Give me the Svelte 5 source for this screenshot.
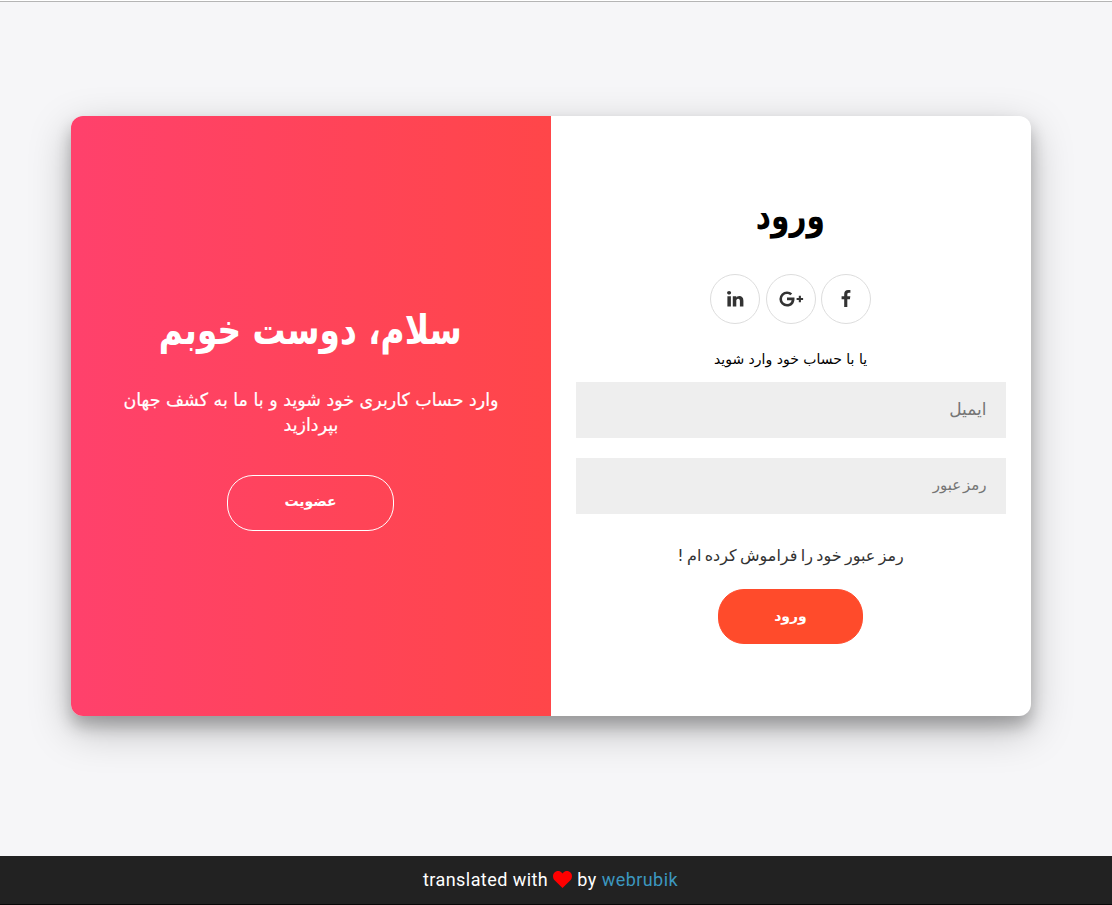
<script>
  const socials = ['facebook', 'google', 'linkedin'];
</script>

<div class="page">
  <main>
    <div class="container" dir="rtl">
      <section class="sign-in">
        <h1 class="title">ورود</h1>
        <div class="social">
          {#each socials as name}
            <a href="#{name}" aria-label={name}>
              {#if name === 'facebook'}
                <svg class="fb" width="10" height="17" viewBox="95 -1536 864 1664"><path d="M959 -1524v264h-157q-86 0 -116 36t-30 108v189h293l-39 296h-254v759h-306v-759h-255v-296h255v-218q0 -186 104 -288.500t277 -102.500q147 0 228 12z" /></svg>
              {:else if name === 'google'}
                <svg class="gp" width="25" height="16" viewBox="0 0 25 16"><path d="M8 6.600h7.400c.1.500.1.900.1 1.400 0 4.500-3 7.600-7.500 7.600A7.600 7.600 0 1 1 8 .4c2.100 0 3.800.7 5.200 2L11.300 4.300C10.700 3.600 9.600 3 8 3a5 5 0 0 0 0 10c3.100 0 4.400-2.200 4.600-3.800H8zM19.800 4.800h2.100v2.200h2.200v2.100h-2.200v2.200h-2.100V9.100h-2.200V7h2.200z" /></svg>
              {:else}
                <svg width="17" height="16" viewBox="0 0 17 16"><path d="M.4 5.200h3.500v10.400H.4zM2.100 0c1.200 0 2 .8 2 1.800s-.8 1.800-2 1.800S.1 2.800.1 1.800.9 0 2.100 0zM5.800 5.200h3.500v1.500C9.800 5.900 10.600 5 12.400 5c2.300 0 4 1.500 4 4.700v5.900h-3.500v-5.500c0-1.400-.5-2.300-1.700-2.300-1.300 0-1.900 1-1.900 2v5.800H5.800z" /></svg>
              {/if}
            </a>
          {/each}
        </div>
        <span class="hint">یا با حساب خود وارد شوید</span>
        <input class="email" type="email" placeholder="ایمیل" />
        <input type="password" placeholder="رمز عبور" />
        <a class="forgot" href="#forgot">رمز عبور خود را فراموش کرده ام !</a>
        <button class="primary">ورود</button>
      </section>
      <section class="overlay">
        <h1>سلام، دوست خوبم</h1>
        <p>وارد حساب کاربری خود شوید و با ما به کشف جهان بپردازید</p>
        <button class="ghost">عضویت</button>
      </section>
    </div>
  </main>
  <footer>
    <span>translated with</span>
    <svg width="19" height="17" viewBox="0 0 19 17"><path d="M9.500 17 1.600 9.200C-.4 7.100-.5 3.600 1.300 1.700 3.500-.6 7-.3 8.800 1.800l.7.800.7-.8C12-.3 15.500-.6 17.700 1.700c1.800 1.900 1.700 5.400-.3 7.500z" /></svg>
    <span>by</span>
    <a href="#webrubik">webrubik</a>
  </footer>
</div>

<style>
  :global(body) { margin: 0; }
  .page {
    box-sizing: border-box;
    height: 905px;
    display: flex;
    flex-direction: column;
    background: #f6f6f8;
    border-top: 1px solid #fff;
    font-family: "DejaVu Sans", sans-serif;
    overflow: hidden;
  }
  main {
    flex: 1;
    display: flex;
    border-top: 1px solid #b5b5b5;
    padding: 114px 81px 0 71px;
  }
  .container {
    width: 960px;
    height: 600px;
    display: flex;
    border-radius: 12px;
    overflow: hidden;
    background: #fff;
    box-shadow: 0 14px 42px rgba(0,0,0,.25), 0 10px 16px rgba(0,0,0,.23);
  }
  section {
    box-sizing: border-box;
    width: 480px;
    display: flex;
    flex-direction: column;
    align-items: center;
  }
  .sign-in { padding: 70px 26px 0 25px; }
  h1 { margin: 0; white-space: nowrap; }
  .title { font-size: 38px; line-height: 60px; margin-bottom: 4px; transform: scaleX(.78); }
  .social { display: flex; gap: 5.5px; margin-top: 24px; }
  .social a {
    box-sizing: border-box;
    width: 50px;
    height: 50px;
    border: 1px solid #ddd;
    border-radius: 50%;
    display: flex;
    align-items: center;
    justify-content: center;
  }
  .social svg { fill: #333; }
  .fb { margin-bottom: 2px; }
  .gp { margin-left: 1px; }
  .hint { font-size: 14px; line-height: 24px; margin: 23px 0 11px; }
  input {
    box-sizing: border-box;
    width: 430px;
    flex-shrink: 0;
    height: 56px;
    border: 0;
    background: #eee;
    padding: 0 19px 2px;
    margin-bottom: 20px;
    font: 15px "DejaVu Sans", sans-serif;
    word-spacing: -3px;
    text-align: right;
  }
  .email { font-size: 17px; }
  input::placeholder { color: #757575; }
  .forgot { font-size: 16px; word-spacing: -1.7px; line-height: 30px; margin: 7px 0 18px; color: #333; text-decoration: none; }
  button {
    box-sizing: border-box;
    border-radius: 26px;
    color: #fff;
    padding: 0 6px 2px;
    font: bold 14px "DejaVu Sans", sans-serif;
  }
  .primary { width: 145px; height: 55px; border: 1px solid #ff4b2b; background: #ff4b2b; }
  .overlay {
    padding: 184px 41px 0 40px;
    color: #fff;
    text-align: center;
    background: linear-gradient(to right, #ff416c, #ff4649);
  }
  .overlay h1 { font-size: 41px; line-height: 60px; transform: scaleX(.8); }
  p { width: 400px; margin: 27px 0 38px; font-size: 18px; line-height: 25px; transform: scaleX(.97); -webkit-text-stroke: .2px #fff; }
  .ghost { width: 167px; height: 56px; border: 1px solid #fff; background: transparent; padding-bottom: 4px; }
  footer {
    box-sizing: border-box;
    height: 49px;
    display: flex;
    align-items: center;
    justify-content: center;
    gap: 5px;
    background: #222;
    border-bottom: 1px solid #080808;
    color: #fff;
    font: 18px Roboto, sans-serif;
    letter-spacing: .45px;
    padding: 0 11px 1px 0;
  }
  footer svg { fill: #f00; }
  footer a { color: #3c97bf; text-decoration: none; }
</style>
